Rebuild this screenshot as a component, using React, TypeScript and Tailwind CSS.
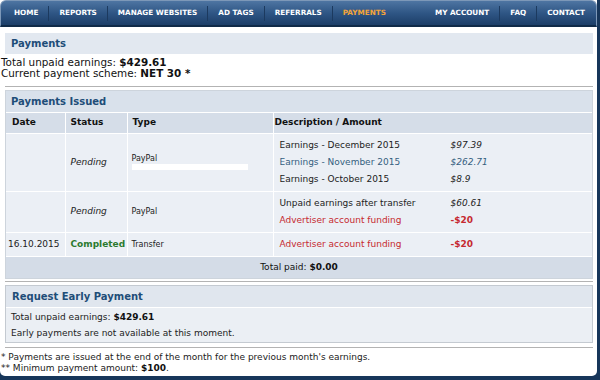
const navLeft = ['HOME', 'REPORTS', 'MANAGE WEBSITES', 'AD TAGS', 'REFERRALS', 'PAYMENTS'];
const navRight = ['MY ACCOUNT', 'FAQ', 'CONTACT'];

interface DescLine {
  text: string;
  amount: string;
  tone: 'plain' | 'blue' | 'red';
}

interface PaymentRow {
  date: string;
  status: string;
  completed?: boolean;
  type: string;
  redacted?: boolean;
  lines: DescLine[];
}

const rows: PaymentRow[] = [
  {
    date: '',
    status: 'Pending',
    type: 'PayPal',
    redacted: true,
    lines: [
      { text: 'Earnings - December 2015', amount: '$97.39', tone: 'plain' },
      { text: 'Earnings - November 2015', amount: '$262.71', tone: 'blue' },
      { text: 'Earnings - October 2015', amount: '$8.9', tone: 'plain' }
    ]
  },
  {
    date: '',
    status: 'Pending',
    type: 'PayPal',
    lines: [
      { text: 'Unpaid earnings after transfer', amount: '$60.61', tone: 'plain' },
      { text: 'Advertiser account funding', amount: '-$20', tone: 'red' }
    ]
  },
  {
    date: '16.10.2015',
    status: 'Completed',
    completed: true,
    type: 'Transfer',
    lines: [{ text: 'Advertiser account funding', amount: '-$20', tone: 'red' }]
  }
];

function NavItem({ label, first }: { label: string; first?: boolean }) {
  const active = label === 'PAYMENTS';
  return (
    <li
      className={`px-[10px] h-[15px] flex items-center ${
        first ? '' : 'border-l border-[#1c3a5f]'
      } ${active ? 'text-[#f3a43a]' : 'text-white'}`}
    >
      {label}
    </li>
  );
}

function DescCell({ lines }: { lines: DescLine[] }) {
  return (
    <div className="flex flex-col">
      {lines.map((l) => {
        const color =
          l.tone === 'red' ? 'text-[#c62a30]' : l.tone === 'blue' ? 'text-[#35607f]' : 'text-[#222]';
        return (
          <div key={l.text + l.amount} className={`h-[17px] flex items-center ${color}`}>
            <span className="w-[171px]">{l.text}</span>
            <span className={l.tone === 'red' ? 'font-bold' : 'italic'}>{l.amount}</span>
          </div>
        );
      })}
    </div>
  );
}

export default function App() {
  return (
    <div className="w-[600px] h-[380px] bg-[#17365a] font-['DejaVu_Sans',sans-serif] text-[#111]">
      <div className="w-[597px] h-[376px] flex flex-col bg-white rounded-b-[5px] overflow-hidden">
        {/* top menu */}
        <nav className="h-[27px] shrink-0 rounded-t-[6px] border border-[#7d98b8] border-b-[2px] border-b-[#0f2a48] bg-gradient-to-b from-[#4e75a2] via-[#2f5685] to-[#1c3e68] flex items-center justify-between pl-[3px] pr-[1px] text-[7.25px] font-bold">
          <ul className="flex items-center">
            {navLeft.map((n, i) => (
              <NavItem key={n} label={n} first={i === 0} />
            ))}
          </ul>
          <ul className="flex items-center">
            {navRight.map((n, i) => (
              <NavItem key={n} label={n} first={i === 0} />
            ))}
          </ul>
        </nav>

        <div className="flex flex-col pt-[6px]">
          <div className="ml-[5px] mr-[4px] h-[21px] bg-[#e2e8f0] flex items-center pl-[6px] text-[10px] font-bold text-[#1e4d78]">
            Payments
          </div>
          <div className="mt-[3px] pl-[1px] text-[10.4px] leading-[11px]">
            <div>
              Total unpaid earnings: <b>$429.61</b>
            </div>
            <div>
              Current payment scheme: <b>NET 30 *</b>
            </div>
          </div>
          <div className="ml-[5px] mr-[4px] mt-[7px] h-px bg-[#b3b3b3]" />

          {/* payments issued */}
          <div className="ml-[5px] mr-[4px] mt-[3px] border border-[#cdd4dc] bg-[#ebeff5]">
            <div className="h-[21px] bg-[#d9e1eb] flex items-center pl-[5px] text-[10px] font-bold text-[#1e4d78]">
              Payments Issued
            </div>
            <table className="w-full border-collapse text-[9px] text-[#222]">
              <thead>
                <tr className="h-[21px] bg-[#d5dde8] text-[#111] text-left">
                  <th className="w-[59px] pl-[6px] border-t border-r border-white font-bold">Date</th>
                  <th className="w-[62px] pl-[5px] border border-white border-l-0 font-bold">Status</th>
                  <th className="w-[146px] pl-[5px] border border-white font-bold">Type</th>
                  <th className="pl-[1px] border-t border-l border-white font-bold">Description / Amount</th>
                </tr>
              </thead>
              <tbody>
                {rows.map((r, i) => (
                  <tr key={i} className="border-t border-white">
                    <td className="pl-[2px] border-r border-white align-middle">{r.date}</td>
                    <td className="pl-[5px] border-r border-white align-middle">
                      {r.completed ? (
                        <span className="font-bold text-[#2b7a2e]">{r.status}</span>
                      ) : (
                        <span className="italic">{r.status}</span>
                      )}
                    </td>
                    <td className="pl-[4px] border-r border-white align-middle text-[8px]">
                      <div className="relative">
                        <span className={r.redacted ? 'relative -top-[4px]' : ''}>{r.type}</span>
                        {r.redacted && (
                          <div className="absolute left-0 top-[7px] w-[116px] h-[6px] bg-white" />
                        )}
                      </div>
                    </td>
                    <td className="pl-[6px] py-[3px] align-middle">
                      <DescCell lines={r.lines} />
                    </td>
                  </tr>
                ))}
                <tr className="h-[21px] border-t border-white bg-[#d4dce7]">
                  <td colSpan={4} className="text-center text-[#111]">
                    Total paid: <b>$0.00</b>
                  </td>
                </tr>
              </tbody>
            </table>
          </div>

          <div className="ml-[5px] mr-[4px] mt-[2px] h-px bg-[#b3b3b3]" />

          {/* early payment */}
          <div className="ml-[5px] mr-[4px] mt-[3px] border border-[#c4cad1] bg-[#ebeff4]">
            <div className="h-[22px] bg-[#e0e6ee] border-b border-white flex items-center pl-[6px] text-[10px] font-bold text-[#1e4d78]">
              Request Early Payment
            </div>
            <div className="pl-[5px] pt-[1px] pb-[1px] text-[9px] leading-[16px] text-[#222]">
              <div>
                Total unpaid earnings: <b className="text-[#111]">$429.61</b>
              </div>
              <div>Early payments are not available at this moment.</div>
            </div>
          </div>

          <div className="ml-[5px] mr-[4px] mt-[4px] h-px bg-[#b3b3b3]" />

          <div className="mt-[4px] pl-[1px] text-[9px] leading-[11px] text-[#222]">
            <div>* Payments are issued at the end of the month for the previous month's earnings.</div>
            <div>
              ** Minimum payment amount: <b className="text-[#111]">$100</b>.
            </div>
          </div>
        </div>
      </div>
    </div>
  );
}
